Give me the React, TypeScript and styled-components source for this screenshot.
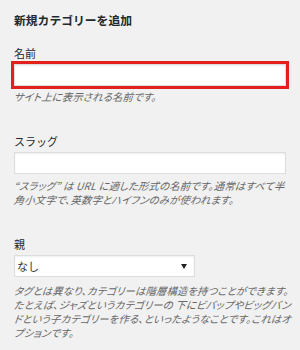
import React from "react";
import styled, { createGlobalStyle } from "styled-components";

const Global = createGlobalStyle`
  html, body { margin: 0; padding: 0; background: #f1f1f1; }
  body { font-family: "Noto Sans CJK JP", "Noto Sans", sans-serif; color: #23282d; }
`;

const Panel = styled.div`
  width: 300px;
  height: 350px;
  box-sizing: border-box;
  padding: 12px 14px 0 14px;
  background: #f1f1f1;
  overflow: hidden;
`;

const Title = styled.h2`
  margin: 0;
  font-size: 11.8px;
  line-height: 16px;
  font-weight: 700;
  color: #23282d;
`;

const Field = styled.div<{ $top: number }>`
  display: flex;
  flex-direction: column;
  align-items: flex-start;
  margin-top: ${(p) => p.$top}px;
`;

const Label = styled.label`
  font-size: 11px;
  line-height: 13px;
  color: #23282d;
  margin-bottom: 4px;
`;

const TextInput = styled.input<{ $highlight?: boolean }>`
  box-sizing: border-box;
  width: 272px;
  height: 22px;
  margin: 0;
  padding: 0 4px;
  background: #fff;
  border: 1px solid #dddddd;
  box-shadow: inset 0 1px 2px rgba(0, 0, 0, 0.07);
  outline: ${(p) => (p.$highlight ? "3px solid #e3201b" : "none")};
  outline-offset: 0;
  font-size: 11px;
`;

const Select = styled.div`
  box-sizing: border-box;
  width: 181px;
  height: 22px;
  display: flex;
  align-items: center;
  justify-content: space-between;
  padding: 0 7px 0 2px;
  background: #fff;
  border: 1px solid #dddddd;
  box-shadow: inset 0 1px 2px rgba(0, 0, 0, 0.07);
  font-size: 11px;
  color: #333;
`;

const Arrow = styled.svg`
  width: 6px;
  height: 5px;
  display: block;
`;

const Description = styled.div<{ $gap: number }>`
  margin: ${(p) => p.$gap}px 0 0 0;
  font-size: 10.3px;
  line-height: 13.8px;
  color: #666;
  white-space: nowrap;
  font-feature-settings: "palt" 1;
  letter-spacing: 0.2px;
`;

const Line = styled.span`
  display: block;
  font-style: italic;
  transform: skewX(-6deg);
  transform-origin: 0 50%;
`;

export default function App() {
  return (
    <>
      <Global />
      <Panel>
        <Title>新規カテゴリーを追加</Title>

        <Field $top={19}>
          <Label>名前</Label>
          <TextInput $highlight />
          <Description $gap={4}>
            <Line>サイト上に表示される名前です。</Line>
          </Description>
        </Field>

        <Field $top={31}>
          <Label>スラッグ</Label>
          <TextInput />
          <Description $gap={5}>
            <Line>“スラッグ” は URL に適した形式の名前です。通常はすべて半</Line>
            <Line>角小文字で、英数字とハイフンのみが使われます。</Line>
          </Description>
        </Field>

        <Field $top={32}>
          <Label>親</Label>
          <Select>
            <span>なし</span>
            <Arrow viewBox="0 0 6 5">
              <path d="M0 0 H6 L3 5 Z" fill="#222" />
            </Arrow>
          </Select>
          <Description $gap={7}>
            <Line>タグとは異なり、カテゴリーは階層構造を持つことができます。</Line>
            <Line>たとえば、ジャズというカテゴリーの 下にビバップやビッグバン</Line>
            <Line>ドという子カテゴリーを作る、といったようなことです。これはオ</Line>
            <Line>プションです。</Line>
          </Description>
        </Field>
      </Panel>
    </>
  );
}
